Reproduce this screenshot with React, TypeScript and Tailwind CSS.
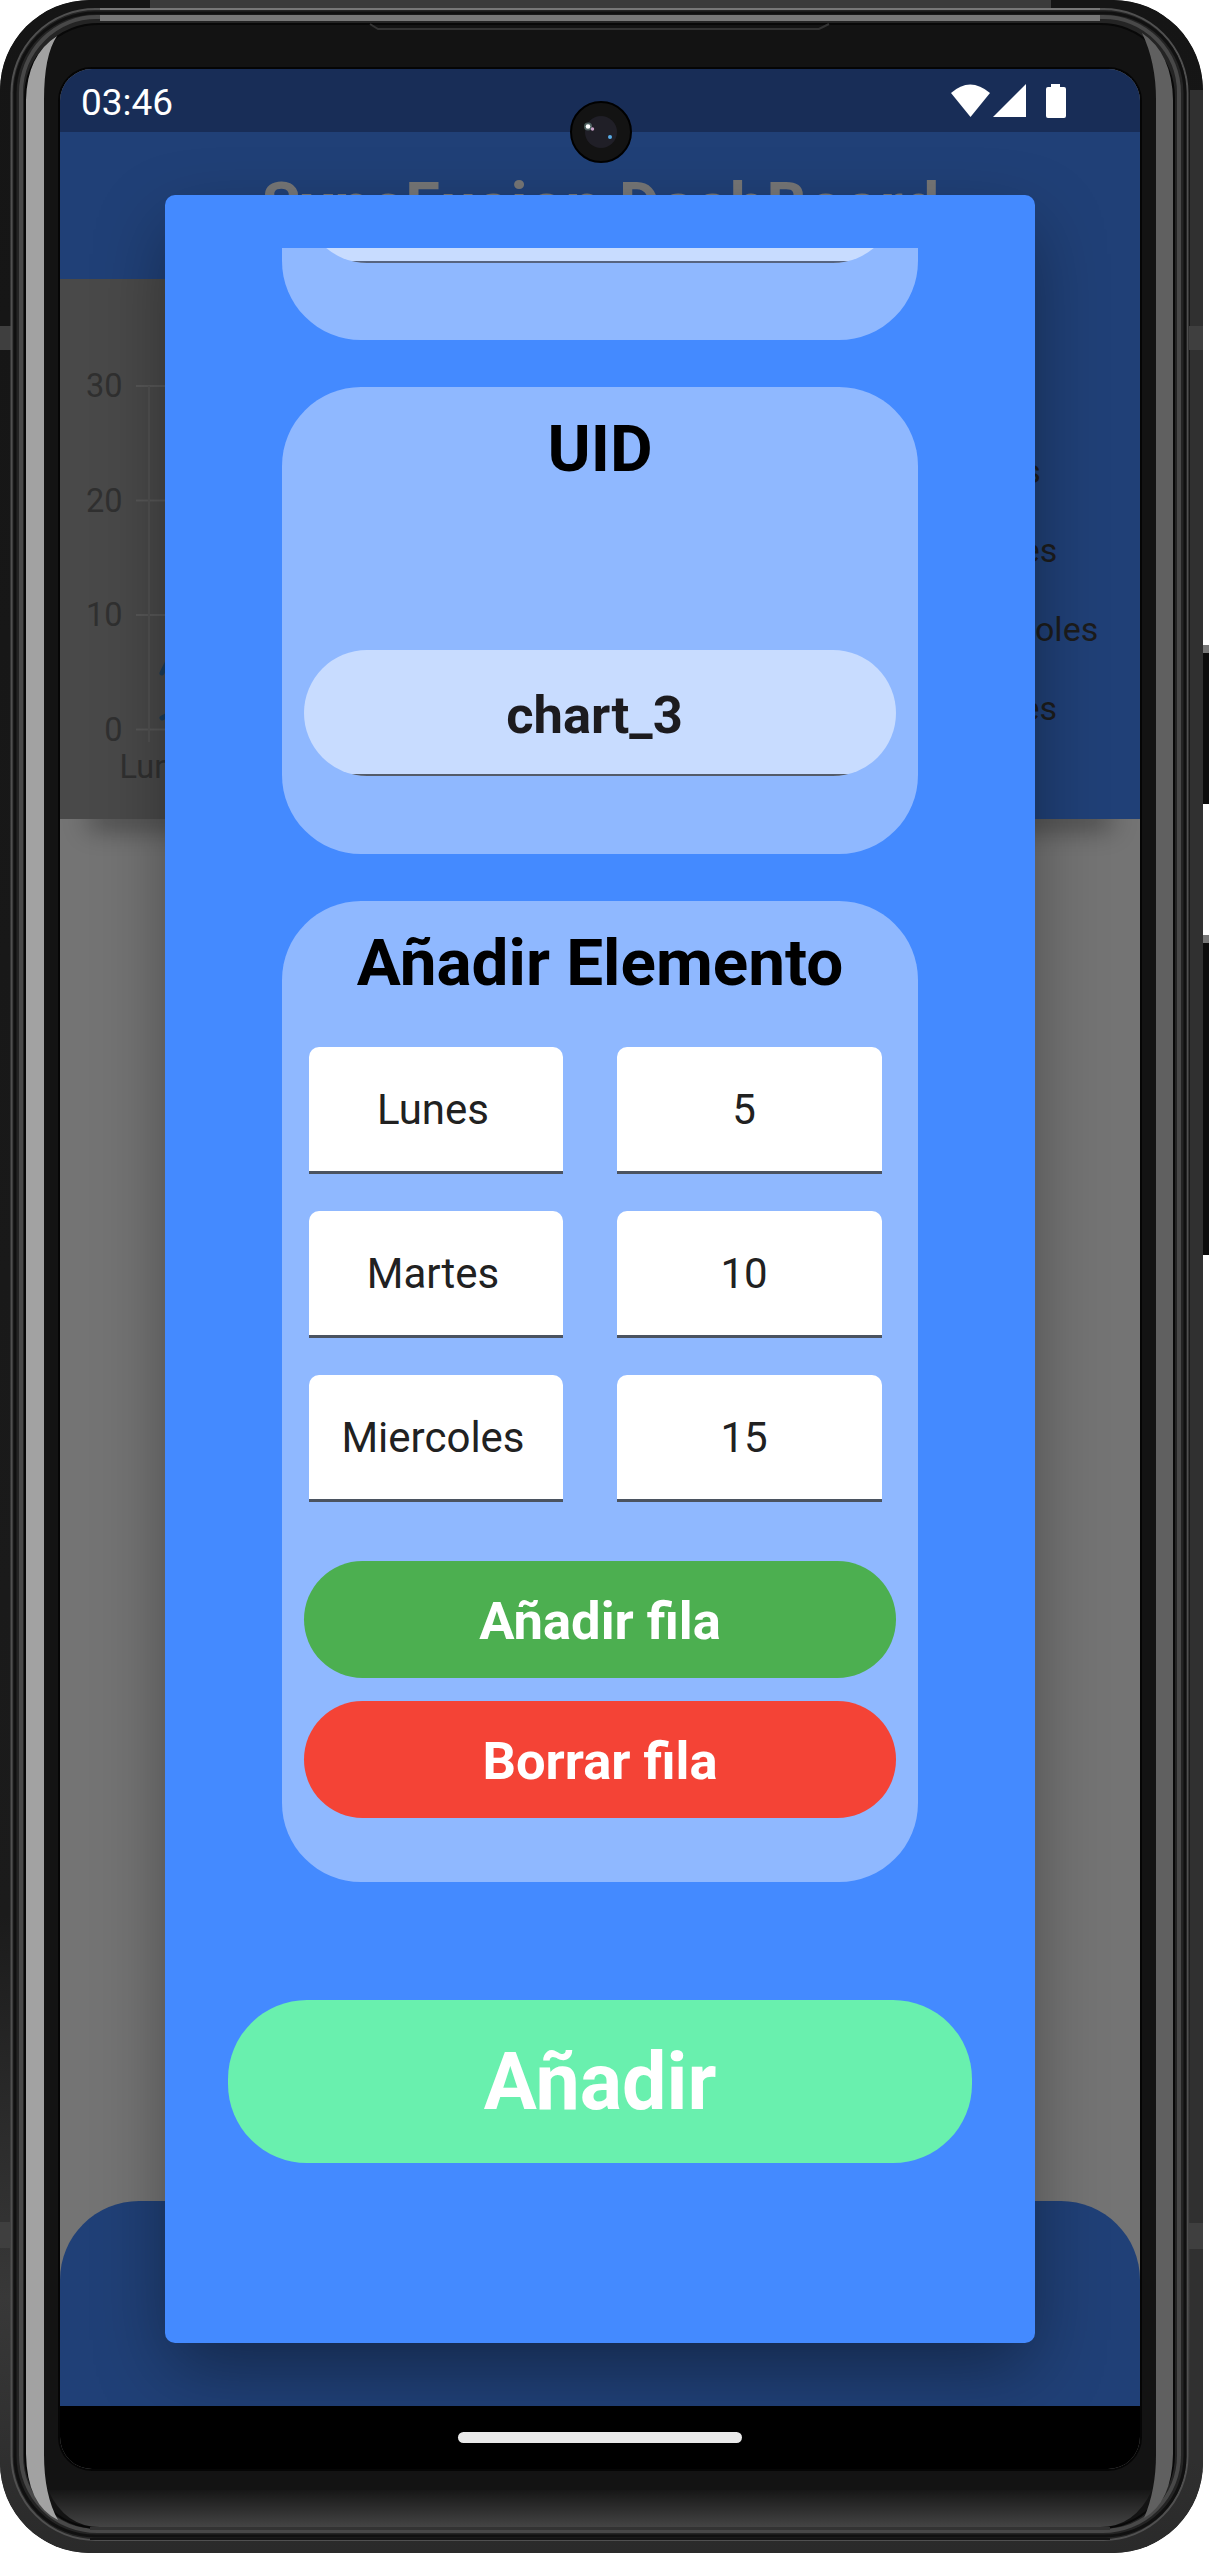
import React from "react";

const rows = [
  ["Lunes", "5"],
  ["Martes", "10"],
  ["Miercoles", "15"],
];

const field =
  "flex items-center justify-center rounded-t-[10px] border-b-[3px] border-[#4b5360] bg-white text-[42px] text-[#212121]";

function StatusBar() {
  return (
    <div className="flex h-[63px] shrink-0 items-center justify-between bg-[#182d57] pl-[21px] pr-[73px] text-white">
      <span className="pt-[3px] text-[37px] leading-none">03:46</span>
      <svg width="116" height="36" viewBox="0 0 116 36" fill="currentColor">
        <path d="M0 10Q19-7 39 10L19.500 34Z" />
        <path d="M75 1V34H42Z" />
        <path d="M100 1h9v3h4q2 0 2 2v27q0 2-2 2H97q-2 0-2-2V6q0-2 2-2h3Z" />
      </svg>
    </div>
  );
}

function Chart() {
  return (
    <div className="relative z-10 flex h-[540px] shrink-0 bg-[#204077]">
      <svg width="640" height="540" className="shrink-0 bg-[#494949]" fontFamily="Roboto" fontSize="32.5" fill="#303030">
        {[30, 20, 10, 0].map((v, i) => (
          <g key={v}>
            <text x="62.5" y={118 + i * 114.5} textAnchor="end">{v}</text>
            <path d={`M76 ${107 + i * 114.5}H640`} stroke="#575757" strokeWidth="2" />
          </g>
        ))}
        <path d="M89 107V463" stroke="#515151" strokeWidth="2" />
        <path d="M102 394l5-10M102 439l8-4" stroke="#1f3d58" strokeWidth="5" strokeLinecap="round" />
        <text x="59.500" y="499">Lunes</text>
      </svg>
      <div className="flex flex-1 flex-col pl-[250px] pt-[153px] text-[34px] leading-[79px] text-[#1c1c1c]">
        {["Lunes", "Martes", "Miercoles", "Jueves"].map((d) => (
          <span key={d}>{d}</span>
        ))}
      </div>
    </div>
  );
}

function Dialog() {
  return (
    <div className="absolute left-[105px] top-[126px] z-20 h-[2148px] w-[870px] rounded-[10px] bg-[#448aff] pt-[53px] shadow-[0_28px_75px_-6px_rgba(0,0,0,0.4)]">
      <div className="flex h-[2095px] flex-col items-center overflow-hidden">
        <section className="flex h-[92px] w-[636px] shrink-0 justify-center overflow-hidden rounded-b-[79px] bg-[#8fb8ff]">
          <div className="-mt-[112px] flex h-[127px] w-[592px] overflow-hidden rounded-[63px] bg-[#c8dcff]">
            <div className="flex-1 border-b-2 border-[#566480]" />
          </div>
        </section>
        <section className="mt-[47px] flex h-[467px] w-[636px] shrink-0 flex-col items-center rounded-[79px] bg-[#8fb8ff]">
          <h2 className="mt-[23px] h-[240px] text-[65.6px] font-bold leading-[77px] text-black">UID</h2>
          <div className="flex h-[126px] w-[592px] overflow-hidden rounded-[63px] bg-[#c8dcff]">
            <div className="flex flex-1 items-center justify-center border-b-2 border-[#535b69] pr-[11px] pt-[6px] text-[52.5px] font-bold text-[#1c1b1f]">
              chart_3
            </div>
          </div>
        </section>
        <section className="mt-[47px] flex h-[981px] w-[636px] shrink-0 flex-col items-center rounded-[79px] bg-[#8fb8ff]">
          <h2 className="mt-[23px] text-[65.6px] font-bold leading-[77px] text-black">Añadir Elemento</h2>
          <div className="mt-[46px] flex flex-col gap-[37px]">
            {rows.map(([day, value]) => (
              <div key={day} className="flex gap-[54px] pr-[9px]">
                <div className={`h-[127px] w-[254px] pr-[6px] ${field}`}>{day}</div>
                <div className={`h-[127px] w-[265px] pr-[11px] ${field}`}>{value}</div>
              </div>
            ))}
          </div>
          <button className="mt-[59px] h-[117px] w-[592px] rounded-full bg-[#4caf50] pt-[3px] text-[52.5px] font-bold text-white">Añadir fila</button>
          <button className="mt-[23px] h-[117px] w-[592px] rounded-full bg-[#f44336] pt-[3px] text-[52.5px] font-bold text-white">Borrar fila</button>
        </section>
        <button className="mt-[118px] h-[163px] w-[744px] shrink-0 rounded-[79px] bg-[#69f0ae] pt-[2px] text-[79px] font-bold text-white">Añadir</button>
      </div>
    </div>
  );
}

function Screen() {
  return (
    <div className="relative flex h-[2400px] w-[1080px] flex-col overflow-hidden rounded-[32px] bg-[#747474]">
      <StatusBar />
      <header className="h-[147px] shrink-0 bg-[#204077] pl-[2px] pt-[37px] text-center text-[63px] font-bold leading-[74px] tracking-[1.3px] text-[#767676]">
        SyncFusion DashBoard
      </header>
      <Chart />
      <div className="mx-[38px] h-0 shadow-[0_0_26px_9px_rgba(0,0,0,0.45)]" />
      <footer className="mt-auto h-[205px] rounded-t-[79px] bg-[#204077]" />
      <Dialog />
      <nav className="relative z-30 flex h-[63px] shrink-0 items-center justify-center bg-black">
        <div className="h-[11px] w-[284px] rounded-full bg-[#eaeaea]" />
      </nav>
      <div className="absolute left-[509.5px] top-[31.5px] z-30 flex size-[62px] items-center justify-center rounded-full border-2 border-black bg-[#131313]">
        <svg width="32" height="32" viewBox="0 0 32 32" className="overflow-visible">
          <circle cx="16" cy="16" r="16" fill="#201f27" />
          <circle cx="3" cy="10.500" r="4" fill="#70908a" opacity=".6" />
          <circle cx="3" cy="10.500" r="2.300" fill="#fff" />
          <circle cx="7.500" cy="13" r="1.700" fill="#c9a3c8" />
          <circle cx="25" cy="21" r="2" fill="#58ade8" />
        </svg>
      </div>
    </div>
  );
}

export default function App() {
  return (
    <main className="relative h-[2553px] w-[1209px] overflow-hidden bg-white font-['Roboto',sans-serif]">
      <div className="absolute left-[1196px] top-[645px] h-[159px] w-[20px] border-t-8 border-[#777] bg-[#0c0c0c]" />
      <div className="absolute left-[1196px] top-[935px] h-[320px] w-[20px] border-t-8 border-[#777] bg-[#0c0c0c]" />
      <div className="relative h-[2553px] w-[1203px] overflow-hidden rounded-[90px] bg-[#1b1b1b] pl-[60px] pt-[69px]">
        <svg width="1203" height="2553" className="absolute inset-0" fill="none">
          <defs>
            <linearGradient id="bottom" x1="0" y1="0" x2="0" y2="1">
              <stop stopColor="#161616" />
              <stop offset="1" stopColor="#444" />
            </linearGradient>
            <linearGradient id="shell" x1="0" y1="0" x2="0" y2="1">
              <stop stopColor="#151515" />
              <stop offset=".75" stopColor="#1b1b1b" />
              <stop offset=".9" stopColor="#383838" />
              <stop offset="1" stopColor="#2a2a2a" />
            </linearGradient>
          </defs>
          <rect width="1203" height="2553" rx="90" fill="url(#shell)" />
          <path d="M1190 90H1203V2460H1190Z" fill="#303030" />
          <path d="M150 0H1051V9H150Z" fill="#3b3b3b" />
          <path d="M0 326H11V350H0ZM1189 326h14v24h-14ZM0 2222H10V2248H0ZM1189 2223h14v26h-14Z" fill="#3f3f3f" />
          <rect x="11.500" y="9" width="1176" height="2531" rx="84" fill="#242424" stroke="#505050" strokeWidth="2" />
          <rect x="15" y="13" width="1170" height="2523" rx="80" stroke="#101010" strokeWidth="3" />
          <rect x="21" y="17" width="1158" height="2514" rx="76" stroke="#484848" strokeWidth="4" />
          <rect x="25" y="24" width="1149" height="2504" rx="74" fill="#131313" stroke="#080808" strokeWidth="2" />
          <path d="M48 2490H1152Q1135 2527 1100 2527H100Q65 2527 48 2490Z" fill="url(#bottom)" />
          <path d="M57 36Q27 55 26 100V2454Q27 2505 58 2520Q44 2495 44 2454V100Q44 55 57 36Z" fill="#a2a2a2" />
          <path d="M1142 33Q1172 53 1173 100V2454Q1172 2502 1144 2518Q1156 2490 1156 2454V100Q1156 62 1142 33Z" fill="#606060" />
          <path d="M100 9H1100" stroke="#777" strokeWidth="2" />
          <path d="M100 18H1100" stroke="#777" strokeWidth="6" />
          <path d="M90 2528.500H1110" stroke="#333" strokeWidth="3" />
          <path d="M90 2539H1110" stroke="#131313" strokeWidth="2" />
          <path d="M370 24l8 5H819l10-5" stroke="#333" strokeWidth="2" />
          <rect x="59" y="68" width="1082" height="2402" rx="33" stroke="#050505" strokeWidth="2" />
        </svg>
        <Screen />
      </div>
    </main>
  );
}
